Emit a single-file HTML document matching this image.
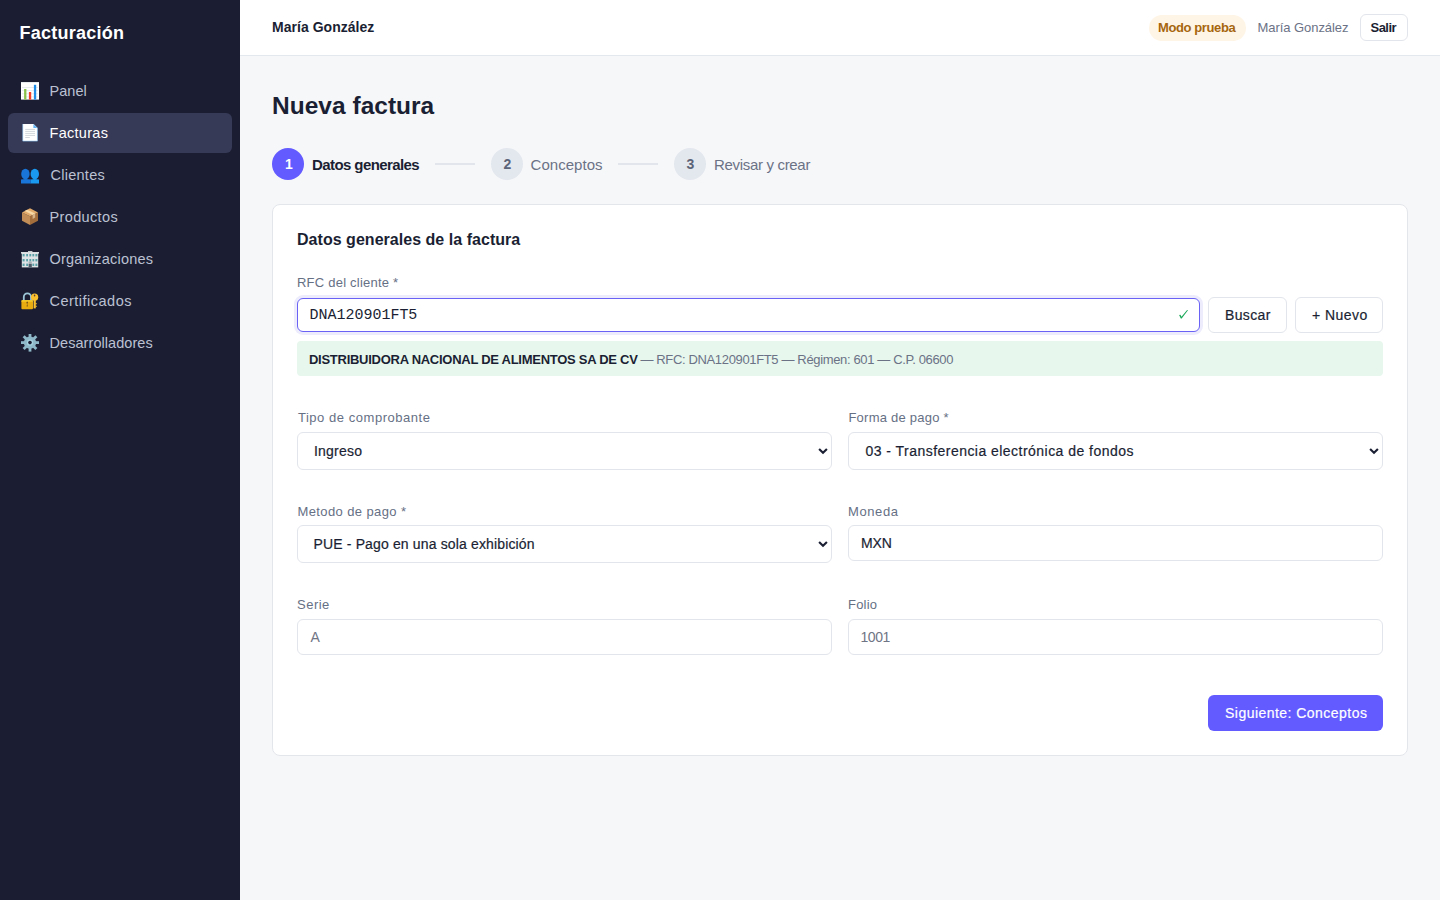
<!DOCTYPE html>
<html lang="es">
<head>
<meta charset="utf-8">
<title>Nueva factura</title>
<style>
*{box-sizing:border-box;margin:0;padding:0}
html,body{width:1440px;height:900px;overflow:hidden}
body{font-family:"Liberation Sans",sans-serif;background:#f6f7f9;position:relative}
.abs{position:absolute;display:block}
.t{position:absolute;white-space:nowrap;line-height:24px}
</style>
</head>
<body>
<div class="abs" style="left:0;top:0;width:240px;height:900px;background:#1b1e33"></div>
<div class="abs" style="left:8px;top:113px;width:224px;height:40px;border-radius:6px;background:#373a56"></div>
<svg class="abs" style="left:21px;top:82px;width:18px;height:18px" viewBox="0 0 18 18"><rect x="0" y="0" width="18" height="17.6" fill="#fff"/><rect x="0" y="0" width="18" height="1" fill="#e9ecef"/><g fill="#e3e7ea"><rect x="1" y="5.2" width="16" height="0.8"/><rect x="1" y="8.3" width="16" height="0.8"/><rect x="1" y="11.4" width="16" height="0.8"/><rect x="1" y="14.5" width="16" height="0.8"/></g><rect x="3.1" y="7" width="2.3" height="10.6" fill="#8bc34a"/><rect x="7.9" y="10" width="2.3" height="7.6" fill="#f4402a"/><rect x="12.9" y="2.8" width="2.3" height="14.8" fill="#1f8de8"/></svg>
<svg class="abs" style="left:21px;top:124px;width:18px;height:18px" viewBox="0 0 18 18"><path d="M1.8 0 H12.6 L16.4 3.8 V17.1 H1.8 Z" fill="#fff"/><path d="M1.8 0 V17.1 H16.4 V3.8" fill="none" stroke="#90caf9" stroke-width="0.6"/><path d="M12.4 0 L16.4 4 H12.4 Z" fill="#64b5f6"/><g fill="#cdd3d8"><rect x="4.2" y="4.9" width="9.8" height="0.9"/><rect x="4.2" y="6.9" width="9.8" height="0.9"/><rect x="4.2" y="8.9" width="9.8" height="0.9"/><rect x="4.2" y="10.9" width="9.8" height="0.9"/><rect x="4.2" y="13" width="4.6" height="0.9"/></g></svg>
<svg class="abs" style="left:21px;top:166px;width:18px;height:18px" viewBox="0 0 18 18"><ellipse cx="13.8" cy="8.1" rx="4.2" ry="5.3" fill="#1b9af2"/><path d="M9.6 13.6 Q13.8 12.6 18 13.6 V17.4 H9.6 Z" fill="#1b9af2"/><ellipse cx="4.4" cy="8.1" rx="4.2" ry="5.3" fill="#1976d8"/><path d="M0 13.6 Q4.4 12.6 9.8 13.6 V17.4 H0 Z" fill="#1976d8"/></svg>
<svg class="abs" style="left:21px;top:208px;width:18px;height:18px" viewBox="0 0 18 18"><path d="M9 8.2 L17 4.4 V12.8 L9 17 Z" fill="#a46d3c"/><path d="M1 4.4 L9 8.2 V17 L1 12.8 Z" fill="#c28d56"/><path d="M9 0.2 L17 4.4 L9 8.2 L1 4.4 Z" fill="#e2ab6c"/><path d="M3.6 3.1 L11.6 6.9 L14.2 5.6 L6.2 1.8 Z" fill="#f6d9a6"/><path d="M11.6 6.9 L14.2 5.6 V9.6 L11.6 10.9 Z" fill="#d8b48a"/></svg>
<svg class="abs" style="left:21px;top:250px;width:18px;height:18px" viewBox="0 0 18 18"><rect x="7" y="1" width="4.4" height="2" fill="#c8cdd0"/><rect x="0" y="2" width="18" height="1.6" fill="#d9dde0"/><rect x="0.8" y="3" width="16.4" height="14.4" fill="#dfe3e5"/><g fill="#5aa0a7"><rect x="1.6" y="4" width="2" height="2.4"/><rect x="5.2" y="4" width="1.8" height="2.4"/><rect x="8.4" y="4" width="1.8" height="2.4"/><rect x="11.4" y="4" width="1.8" height="2.4"/><rect x="14.4" y="4" width="2" height="2.4"/><rect x="1.6" y="9" width="2" height="2.4"/><rect x="5.2" y="9" width="1.8" height="2.4"/><rect x="8.4" y="9" width="1.8" height="2.4"/><rect x="11.4" y="9" width="1.8" height="2.4"/><rect x="14.4" y="9" width="2" height="2.4"/><rect x="1.6" y="13.6" width="2" height="2.4"/><rect x="5.2" y="13.6" width="1.8" height="2.4"/><rect x="11.4" y="13.6" width="1.8" height="2.4"/><rect x="14.4" y="13.6" width="2" height="2.4"/></g><rect x="7.6" y="13.6" width="3.2" height="3.8" fill="#4a5a66"/><rect x="7.6" y="11.6" width="3.2" height="1.2" fill="#9aa3a8"/></svg>
<svg class="abs" style="left:21px;top:292px;width:18px;height:18px" viewBox="0 0 18 18"><path d="M2.8 8.4 V5 A3.6 3.6 0 0 1 10 5 V8.4" fill="none" stroke="#9cc6d6" stroke-width="1.8"/><circle cx="13.6" cy="5.2" r="3.6" fill="#fbc02d"/><rect x="12.6" y="7" width="2.2" height="9.4" fill="#fbc02d"/><rect x="14.4" y="11.2" width="1.4" height="1" fill="#fbc02d"/><rect x="14.4" y="13.8" width="1.4" height="1" fill="#fbc02d"/><ellipse cx="13.6" cy="3.4" rx="0.8" ry="1" fill="#5d4037"/><rect x="0.4" y="8.2" width="11.6" height="9" rx="1" fill="#e8ac10"/><rect x="0.4" y="8.2" width="11.6" height="1.4" rx="0.6" fill="#fdd835"/><path d="M6.2 11.4 a0.8 0.8 0 1 1 0.01 0 L6.8 14.6 H5.6 Z" fill="#6d4c1a"/></svg>
<svg class="abs" style="left:21px;top:334px;width:18px;height:18px" viewBox="0 0 18 18"><g fill="#8fb9c9" transform="translate(9 8.6)"><circle r="6.2"/><g id="t"><rect x="-1.4" y="-9" width="2.8" height="4"/><rect x="-1.4" y="5" width="2.8" height="4"/><rect x="-9" y="-1.4" width="4" height="2.8"/><rect x="5" y="-1.4" width="4" height="2.8"/></g><g transform="rotate(45)"><rect x="-1.4" y="-9" width="2.8" height="4"/><rect x="-1.4" y="5" width="2.8" height="4"/><rect x="-9" y="-1.4" width="4" height="2.8"/><rect x="5" y="-1.4" width="4" height="2.8"/></g><circle r="3.2" fill="#a6d2e0"/><circle r="1.8" fill="#1b1e33"/></g></svg>
<div class="abs" style="left:240px;top:0;width:1200px;height:55px;background:#fff"></div>
<div class="abs" style="left:240px;top:55px;width:1200px;height:1px;background:#e3e7ee"></div>
<div class="abs" style="left:1149px;top:15px;width:97px;height:26px;border-radius:13px;background:#fff5e6"></div>
<div class="abs" style="left:1360px;top:14px;width:48px;height:27px;border:1px solid #e2e5eb;border-radius:6px;background:#fff"></div>
<div class="abs" style="left:272px;top:148px;width:32px;height:32px;border-radius:50%;background:#635bff"></div>
<div class="abs" style="left:491px;top:148px;width:32px;height:32px;border-radius:50%;background:#e3e7ee"></div>
<div class="abs" style="left:674px;top:148px;width:32px;height:32px;border-radius:50%;background:#e3e7ee"></div>
<div class="abs" style="left:435px;top:163px;width:40px;height:2px;background:#e2e6ec"></div>
<div class="abs" style="left:618px;top:163px;width:40px;height:2px;background:#e2e6ec"></div>
<div class="abs" style="left:272px;top:204px;width:1136px;height:552px;background:#fff;border:1px solid #e3e6eb;border-radius:8px"></div>
<div class="abs" style="left:297px;top:298px;width:903px;height:34px;background:#fff;border:1.5px solid #6a62f5;border-radius:6px;box-shadow:0 0 0 3px #edecfd"></div>
<svg class="abs" style="left:1177px;top:308px" width="13" height="12" viewBox="0 0 13 12"><path d="M2.1 7.0 L3.4 6.8 L4.5 8.7 L10.1 1.9 L11.0 2.3 L4.7 10.5 L3.8 10.4 Z" fill="#1aa858"/></svg>
<div class="abs" style="left:1208px;top:297px;width:79px;height:36px;background:#fff;border:1px solid #e2e5eb;border-radius:6px"></div>
<div class="abs" style="left:1295px;top:297px;width:88px;height:36px;background:#fff;border:1px solid #e2e5eb;border-radius:6px"></div>
<div class="abs" style="left:297px;top:341px;width:1086px;height:35px;background:#e7f7ed;border-radius:4px"></div>
<div class="abs" style="left:297px;top:432px;width:535px;height:38px;background:#fff;border:1px solid #e2e5eb;border-radius:6px"></div>
<svg class="abs" style="left:817px;top:447px" width="12" height="8" viewBox="0 0 12 8"><path d="M2.1 1.9 L6 5.8 L9.9 1.9" fill="none" stroke="#1b1f33" stroke-width="2.1" stroke-linecap="butt" stroke-linejoin="miter"/></svg>
<div class="abs" style="left:848px;top:432px;width:535px;height:38px;background:#fff;border:1px solid #e2e5eb;border-radius:6px"></div>
<svg class="abs" style="left:1368px;top:447px" width="12" height="8" viewBox="0 0 12 8"><path d="M2.1 1.9 L6 5.8 L9.9 1.9" fill="none" stroke="#1b1f33" stroke-width="2.1" stroke-linecap="butt" stroke-linejoin="miter"/></svg>
<div class="abs" style="left:297px;top:525px;width:535px;height:38px;background:#fff;border:1px solid #e2e5eb;border-radius:6px"></div>
<svg class="abs" style="left:817px;top:540px" width="12" height="8" viewBox="0 0 12 8"><path d="M2.1 1.9 L6 5.8 L9.9 1.9" fill="none" stroke="#1b1f33" stroke-width="2.1" stroke-linecap="butt" stroke-linejoin="miter"/></svg>
<div class="abs" style="left:848px;top:525px;width:535px;height:36px;background:#fff;border:1px solid #e2e5eb;border-radius:6px"></div>
<div class="abs" style="left:297px;top:619px;width:535px;height:36px;background:#fff;border:1px solid #e2e5eb;border-radius:6px"></div>
<div class="abs" style="left:848px;top:619px;width:535px;height:36px;background:#fff;border:1px solid #e2e5eb;border-radius:6px"></div>
<div class="abs" style="left:1208px;top:695px;width:175px;height:36px;background:#635bff;border-radius:6px"></div>
<div class="t" id="brand" style="left:19.56px;top:21.20px;font-family:'Liberation Sans',sans-serif;font-size:18px;font-weight:700;color:#ffffff;letter-spacing:0.252px">Facturación</div>
<div class="t" id="n0" style="left:49.50px;top:79.46px;font-family:'Liberation Sans',sans-serif;font-size:14.5px;font-weight:400;color:#bcc1d2;letter-spacing:0.043px">Panel</div>
<div class="t" id="n1" style="left:49.52px;top:121.46px;font-family:'Liberation Sans',sans-serif;font-size:14.5px;font-weight:400;color:#ffffff;letter-spacing:0.282px">Facturas</div>
<div class="t" id="n2" style="left:50.42px;top:163.46px;font-family:'Liberation Sans',sans-serif;font-size:14.5px;font-weight:400;color:#bcc1d2;letter-spacing:0.282px">Clientes</div>
<div class="t" id="n3" style="left:49.52px;top:205.46px;font-family:'Liberation Sans',sans-serif;font-size:14.5px;font-weight:400;color:#bcc1d2;letter-spacing:0.359px">Productos</div>
<div class="t" id="n4" style="left:49.50px;top:247.46px;font-family:'Liberation Sans',sans-serif;font-size:14.5px;font-weight:400;color:#bcc1d2;letter-spacing:0.208px">Organizaciones</div>
<div class="t" id="n5" style="left:49.50px;top:289.46px;font-family:'Liberation Sans',sans-serif;font-size:14.5px;font-weight:400;color:#bcc1d2;letter-spacing:0.491px">Certificados</div>
<div class="t" id="n6" style="left:49.50px;top:331.46px;font-family:'Liberation Sans',sans-serif;font-size:14.5px;font-weight:400;color:#bcc1d2;letter-spacing:0.064px">Desarrolladores</div>
<div class="t" id="user" style="left:272.00px;top:15.17px;font-family:'Liberation Sans',sans-serif;font-size:14px;font-weight:700;color:#1b1f33;letter-spacing:0.028px">María González</div>
<div class="t" id="pill" style="left:1158.04px;top:16.42px;font-family:'Liberation Sans',sans-serif;font-size:13px;font-weight:700;color:#a6660e;letter-spacing:-0.396px">Modo prueba</div>
<div class="t" id="uname" style="left:1257.50px;top:16.42px;font-family:'Liberation Sans',sans-serif;font-size:13px;font-weight:400;color:#6b7286;letter-spacing:-0.056px">María González</div>
<div class="t" id="salir" style="left:1370.50px;top:16.42px;font-family:'Liberation Sans',sans-serif;font-size:13px;font-weight:700;color:#1b1f33;letter-spacing:-0.540px">Salir</div>
<div class="t" id="h1" style="left:272.06px;top:94.43px;font-family:'Liberation Sans',sans-serif;font-size:24.5px;font-weight:700;color:#1b1f33;letter-spacing:0.013px">Nueva factura</div>
<div class="t" id="c1" style="left:285.00px;top:152.17px;font-family:'Liberation Sans',sans-serif;font-size:14px;font-weight:700;color:#ffffff;letter-spacing:0.000px">1</div>
<div class="t" id="st1" style="left:312.02px;top:152.74px;font-family:'Liberation Sans',sans-serif;font-size:15px;font-weight:700;color:#1b1f33;letter-spacing:-0.591px">Datos generales</div>
<div class="t" id="c2" style="left:503.40px;top:152.17px;font-family:'Liberation Sans',sans-serif;font-size:14px;font-weight:700;color:#5b6478;letter-spacing:0.000px">2</div>
<div class="t" id="st2" style="left:530.50px;top:152.74px;font-family:'Liberation Sans',sans-serif;font-size:15px;font-weight:400;color:#6b7286;letter-spacing:0.046px">Conceptos</div>
<div class="t" id="c3" style="left:686.40px;top:152.17px;font-family:'Liberation Sans',sans-serif;font-size:14px;font-weight:700;color:#5b6478;letter-spacing:0.000px">3</div>
<div class="t" id="st3" style="left:714.02px;top:152.74px;font-family:'Liberation Sans',sans-serif;font-size:15px;font-weight:400;color:#6b7286;letter-spacing:-0.321px">Revisar y crear</div>
<div class="t" id="ctitle" style="left:297.00px;top:228.44px;font-family:'Liberation Sans',sans-serif;font-size:16px;font-weight:700;color:#1b1f33;letter-spacing:0.032px">Datos generales de la factura</div>
<div class="t" id="l_rfc" style="left:297.00px;top:270.92px;font-family:'Liberation Sans',sans-serif;font-size:13px;font-weight:400;color:#667085;letter-spacing:0.225px">RFC del cliente *</div>
<div class="t" id="rfc" style="left:309.56px;top:303.91px;font-family:'Liberation Mono',monospace;font-size:15px;font-weight:400;color:#1b1f33;letter-spacing:-0.018px">DNA120901FT5</div>
<div class="t" id="buscar" style="left:1225.00px;top:303.15px;font-family:'Liberation Sans',sans-serif;font-size:14px;font-weight:400;color:#1b1f33;letter-spacing:0.360px;-webkit-text-stroke:0.2px #1b1f33">Buscar</div>
<div class="t" id="nuevo" style="left:1312.00px;top:303.15px;font-family:'Liberation Sans',sans-serif;font-size:14px;font-weight:400;color:#1b1f33;letter-spacing:0.450px;-webkit-text-stroke:0.2px #1b1f33">+ Nuevo</div>
<div class="t" id="info_b" style="left:309.00px;top:347.63px;font-family:'Liberation Sans',sans-serif;font-size:13px;font-weight:700;color:#1b1f33;letter-spacing:-0.270px">DISTRIBUIDORA NACIONAL DE ALIMENTOS SA DE CV</div>
<div class="t" id="info_g" style="left:640.40px;top:347.63px;font-family:'Liberation Sans',sans-serif;font-size:13px;font-weight:400;color:#6b7286;letter-spacing:-0.352px">— RFC: DNA120901FT5 — Régimen: 601 — C.P. 06600</div>
<div class="t" id="l_tipo" style="left:297.90px;top:405.50px;font-family:'Liberation Sans',sans-serif;font-size:13px;font-weight:400;color:#667085;letter-spacing:0.540px">Tipo de comprobante</div>
<div class="t" id="v_tipo" style="left:314.02px;top:439.13px;font-family:'Liberation Sans',sans-serif;font-size:14px;font-weight:400;color:#1b1f33;letter-spacing:0.210px;-webkit-text-stroke:0.2px #1b1f33">Ingreso</div>
<div class="t" id="l_forma" style="left:848.44px;top:405.50px;font-family:'Liberation Sans',sans-serif;font-size:13px;font-weight:400;color:#667085;letter-spacing:0.231px">Forma de pago *</div>
<div class="t" id="v_forma" style="left:865.46px;top:439.13px;font-family:'Liberation Sans',sans-serif;font-size:14px;font-weight:400;color:#1b1f33;letter-spacing:0.466px;-webkit-text-stroke:0.2px #1b1f33">03 - Transferencia electrónica de fondos</div>
<div class="t" id="l_met" style="left:297.46px;top:500.42px;font-family:'Liberation Sans',sans-serif;font-size:13px;font-weight:400;color:#667085;letter-spacing:0.396px">Metodo de pago *</div>
<div class="t" id="v_met" style="left:313.54px;top:531.71px;font-family:'Liberation Sans',sans-serif;font-size:14px;font-weight:400;color:#1b1f33;letter-spacing:0.145px;-webkit-text-stroke:0.2px #1b1f33">PUE - Pago en una sola exhibición</div>
<div class="t" id="l_mon" style="left:847.98px;top:500.42px;font-family:'Liberation Sans',sans-serif;font-size:13px;font-weight:400;color:#667085;letter-spacing:0.612px">Moneda</div>
<div class="t" id="v_mon" style="left:861.00px;top:531.17px;font-family:'Liberation Sans',sans-serif;font-size:14px;font-weight:400;color:#1b1f33;letter-spacing:-0.180px;-webkit-text-stroke:0.2px #1b1f33">MXN</div>
<div class="t" id="l_serie" style="left:297.00px;top:593.42px;font-family:'Liberation Sans',sans-serif;font-size:13px;font-weight:400;color:#667085;letter-spacing:0.495px">Serie</div>
<div class="t" id="v_serie" style="left:310.44px;top:625.15px;font-family:'Liberation Sans',sans-serif;font-size:14px;font-weight:400;color:#6f7585;letter-spacing:0.000px">A</div>
<div class="t" id="l_folio" style="left:847.98px;top:593.42px;font-family:'Liberation Sans',sans-serif;font-size:13px;font-weight:400;color:#667085;letter-spacing:0.225px">Folio</div>
<div class="t" id="v_folio" style="left:860.48px;top:625.15px;font-family:'Liberation Sans',sans-serif;font-size:14px;font-weight:400;color:#6f7585;letter-spacing:-0.420px">1001</div>
<div class="t" id="next" style="left:1225.00px;top:701.17px;font-family:'Liberation Sans',sans-serif;font-size:14px;font-weight:400;color:#ffffff;letter-spacing:0.464px;-webkit-text-stroke:0.2px #ffffff">Siguiente: Conceptos</div>
</body>
</html>
